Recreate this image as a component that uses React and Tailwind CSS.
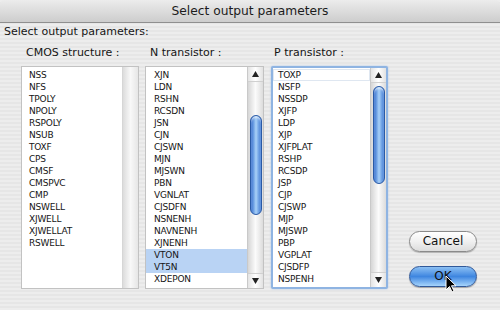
import React from "react";

const cmos = ["NSS", "NFS", "TPOLY", "NPOLY", "RSPOLY", "NSUB", "TOXF", "CPS", "CMSF", "CMSPVC", "CMP", "NSWELL", "XJWELL", "XJWELLAT", "RSWELL"];
const nTrans = ["XJN", "LDN", "RSHN", "RCSDN", "JSN", "CJN", "CJSWN", "MJN", "MJSWN", "PBN", "VGNLAT", "CJSDFN", "NSNENH", "NAVNENH", "XJNENH", "VTON", "VT5N", "XDEPON"];
const pTrans = ["TOXP", "NSFP", "NSSDP", "XJFP", "LDP", "XJP", "XJFPLAT", "RSHP", "RCSDP", "JSP", "CJP", "CJSWP", "MJP", "MJSWP", "PBP", "VGPLAT", "CJSDFP", "NSPENH"];

const UpArrow = () => (
  <svg width="7" height="6" viewBox="0 0 7 6">
    <polygon points="3.5,0 7,6 0,6" fill="#222" />
  </svg>
);

const DownArrow = () => (
  <svg width="7" height="6" viewBox="0 0 7 6">
    <polygon points="0,0 7,0 3.5,6" fill="#222" />
  </svg>
);

// aqua scrollbar, thumbClass carries the offset + height
const ScrollBar = ({ thumbClass }) => (
  <div className="w-[16px] flex flex-col border-l border-[#c9c9c9] bg-gradient-to-r from-[#d6d6d6] via-[#fbfbfb] to-[#dcdcdc]">
    <div className="h-[15px] flex items-center justify-center border-b border-[#d0d0d0] bg-gradient-to-r from-[#e4e4e4] via-white to-[#e2e2e2]">
      <UpArrow />
    </div>
    <div className="flex-1 flex flex-col items-center">
      <div className={"w-[12px] rounded-full border border-[#2a5aa6] bg-gradient-to-r from-[#2f6acb] via-[#a9d1f8] to-[#3d78d2] shadow-[inset_0_2px_2px_rgba(255,255,255,0.6)] " + thumbClass} />
    </div>
    <div className="h-[15px] flex items-center justify-center border-t border-[#d0d0d0] bg-gradient-to-r from-[#e4e4e4] via-white to-[#e2e2e2]">
      <DownArrow />
    </div>
  </div>
);

const Row = ({ label, selected, focused, pad }) => (
  <div
    className={
      "h-[12px] leading-[12px] text-[9px] tracking-[-0.2px] whitespace-nowrap " +
      pad +
      (selected ? " bg-[#b9d3f4]" : "") +
      (focused ? " outline outline-1 outline-[#dfe7f1] -outline-offset-1" : "")
    }
  >
    {label}
  </div>
);

const App = () => {
  return (
    <div className="w-[500px] h-[310px] overflow-hidden relative font-['DejaVu_Sans',sans-serif] text-[#151515] bg-[repeating-linear-gradient(to_bottom,#ededed_0px,#ededed_2px,#e6e6e6_2px,#e6e6e6_4px)]">
      <div className="h-[23px] flex items-center justify-center rounded-t-[5px] border-b border-[#8f8f8f] bg-gradient-to-b from-[#ececec] to-[#cdcdcd] text-[12.25px] text-[#1c1c1c]">
        Select output parameters
      </div>

      <div className="pl-[4px] pt-[2px] text-[11px] leading-[14px]">Select output parameters:</div>

      <div className="flex pl-[21px] mt-[7px]">
        {/* CMOS structure */}
        <div className="flex flex-col">
          <div className="pl-[5px] text-[11px] leading-[14px] mb-[6px]">CMOS structure :</div>
          <div className="w-[118px] h-[223px] flex border border-[#c2c2c2] bg-white">
            <div className="flex-1 pt-[2px]">
              {cmos.map((c) => (
                <Row key={c} label={c} pad="pl-[7px]" />
              ))}
            </div>
            <div className="w-[16px] bg-gradient-to-r from-[#dcdcdc] via-[#f8f8f8] to-[#e6e6e6] border-l border-[#d6d6d6]" />
          </div>
        </div>

        {/* N transistor */}
        <div className="flex flex-col ml-[6px]">
          <div className="pl-[5px] text-[11px] leading-[14px] mb-[6px]">N transistor :</div>
          <div className="w-[119px] h-[223px] flex border border-[#c2c2c2] bg-white">
            <div className="flex-1 pt-[2px]">
              {nTrans.map((c) => (
                <Row key={c} label={c} pad="pl-[8px]" selected={c === "VTON" || c === "VT5N"} />
              ))}
            </div>
            <ScrollBar thumbClass="mt-[33px] h-[100px]" />
          </div>
        </div>

        {/* P transistor */}
        <div className="flex flex-col ml-[7px]">
          <div className="pl-[3px] text-[11px] leading-[14px] mb-[6px]">P transistor :</div>
          <div className="w-[117px] h-[223px] flex border-2 border-[#8fb4e2] rounded-[2px] bg-white shadow-[0_0_2px_#a9c6ec]">
            <div className="flex-1 pt-[1px]">
              {pTrans.map((c) => (
                <Row key={c} label={c} pad="pl-[5px]" focused={c === "TOXP"} />
              ))}
            </div>
            <ScrollBar thumbClass="mt-[3px] h-[98px]" />
          </div>
        </div>

        {/* buttons */}
        <div className="flex flex-col justify-end gap-[14px] ml-[21px] pb-[2px]">
          <button className="w-[68px] h-[21px] rounded-full border border-[#8a8a8a] bg-gradient-to-b from-white via-[#f0f0f0] to-[#dcdcdc] shadow-[0_1px_1px_rgba(0,0,0,0.25)] text-[12px] leading-[19px] text-[#111]">
            Cancel
          </button>
          <button className="w-[68px] h-[21px] rounded-full border border-[#31599a] bg-gradient-to-b from-[#8cc0f3] via-[#3e86e0] to-[#a6d4fb] shadow-[0_1px_1px_rgba(0,0,0,0.3)] text-[12px] leading-[19px] text-[#111]">
            OK
          </button>
        </div>
      </div>

      {/* mouse pointer */}
      <svg className="absolute left-[445px] top-[275px]" width="12" height="19" viewBox="0 0 12 19">
        <path d="M1 1 L1 15 L4.5 11.5 L7 17 L9 16 L6.5 10.8 L11 10.8 Z" fill="#000" stroke="#fff" strokeWidth="1" />
      </svg>
    </div>
  );
};

export default App;
